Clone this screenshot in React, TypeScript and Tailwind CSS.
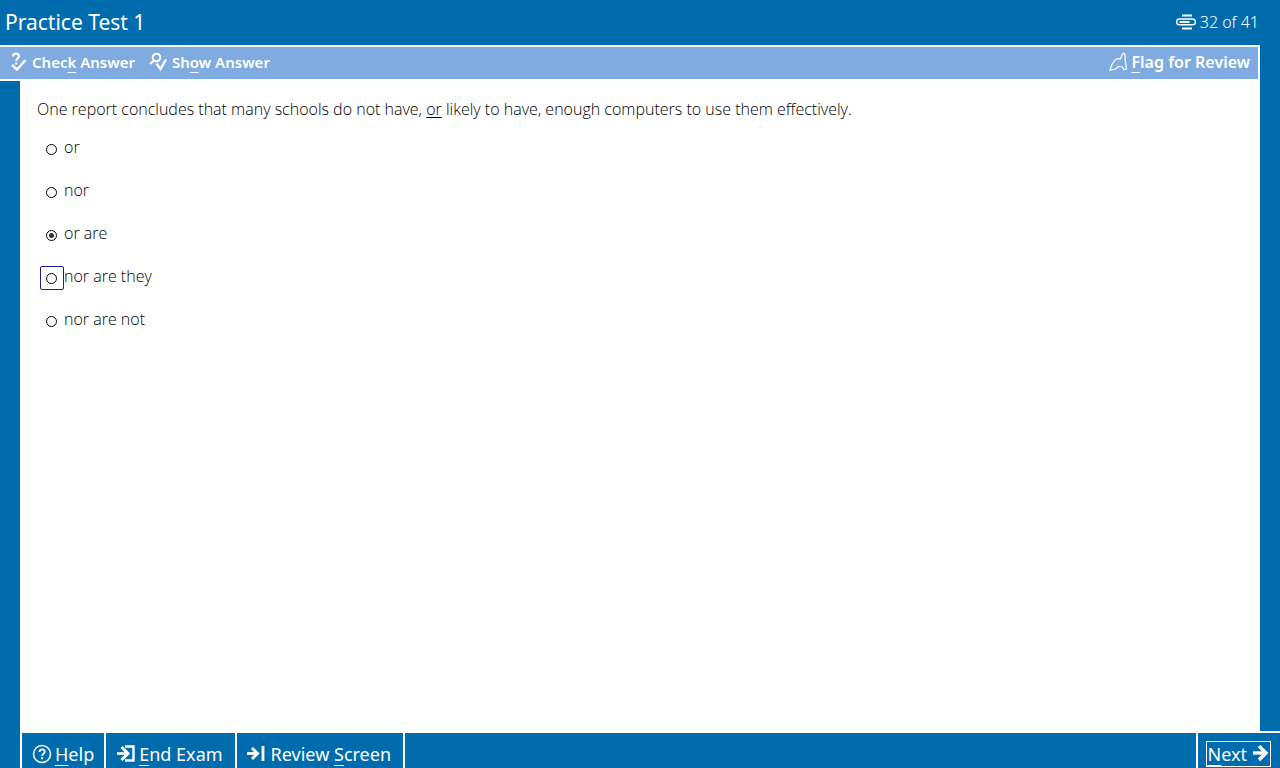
import { useState } from "react";

const options = ["or", "nor", "or are", "nor are they", "nor are not"];

export default function App() {
  const [answer, setAnswer] = useState("or are");
  const [focused, setFocused] = useState("nor are they");

  return (
    <div className="flex min-h-screen flex-col bg-[#006cad] font-['Noto_Sans',sans-serif] text-white">
      <header className="flex h-11 items-center justify-between pr-[21px] pl-[5px]">
        <h1 className="text-[21px] leading-6">Practice Test 1</h1>
        <div className="flex items-center gap-1 text-[16px] leading-6 font-light">
          <ProgressIcon />
          <span>32 of 41</span>
        </div>
      </header>

      <div className="mt-px mr-5 flex h-9 items-center justify-between border-y-2 border-r-2 border-white bg-[#80abe0] pr-2 pb-[2px] pl-[10px] text-[15px] leading-5 font-semibold">
        <div className="flex items-center gap-[14px]">
          <button className="flex items-center gap-1">
            <CheckAnswerIcon />
            <span>
              Chec<Key>k</Key> Answer
            </span>
          </button>
          <button className="flex items-center gap-[5px]">
            <ShowAnswerIcon />
            <span>
              Sh<Key>o</Key>w Answer
            </span>
          </button>
        </div>
        <button className="flex items-center gap-1 text-[16px]">
          <FlagIcon />
          <span>
            <Key>F</Key>lag for Review
          </span>
        </button>
      </div>

      <main className="mx-5 flex-1 bg-white px-[17px] pt-4 text-black">
        <fieldset className="font-['Open_Sans',sans-serif] text-[16px] leading-6 font-light">
          <legend>
            One report concludes that many schools do not have,{" "}
            <span className="underline decoration-1 underline-offset-2">or</span>{" "}
            likely to have, enough computers to use them effectively.
          </legend>
          <div className="mt-[14px] ml-[3px] flex flex-col items-start gap-[19px]">
            {options.map((option) => (
              <label key={option} className="flex h-6 items-center">
                <span
                  className={
                    option === focused
                      ? "mt-1 flex size-6 items-center rounded-xs border border-[#1c1c96] pl-[5px]"
                      : "mt-1 flex size-6 items-center pl-[6px]"
                  }
                >
                  <input
                    type="radio"
                    name="answer"
                    value={option}
                    checked={option === answer}
                    onFocus={() => setFocused(option)}
                    onChange={() => setAnswer(option)}
                    className="flex size-[11px] appearance-none items-center justify-center rounded-full border border-black bg-white outline-none before:size-[5px] before:rounded-full checked:before:bg-[#333333]"
                  />
                </span>
                <span>{option}</span>
              </label>
            ))}
          </div>
        </fieldset>
      </main>

      <footer>
        <div className="mx-5 h-[2px] bg-white" />
        <nav className="-mt-[2px] ml-5 flex h-[37px] border-t-2 border-white text-[18px] leading-6">
          <button className="flex items-center gap-[3px] border-x-2 border-white px-[10px] pt-[6px]">
            <HelpIcon />
            <span>
              <Key>H</Key>elp
            </span>
          </button>
          <button className="flex items-center gap-[3px] border-r-2 border-white pt-[6px] pr-3 pl-[10px]">
            <EndIcon />
            <span>
              <Key>E</Key>nd Exam
            </span>
          </button>
          <button className="flex items-center gap-1 border-r-2 border-white pt-[6px] pr-3 pl-[10px]">
            <ReviewIcon />
            <span>
              Review <Key>S</Key>creen
            </span>
          </button>
          <div className="ml-auto border-l-2 border-white pt-2 pr-[9px] pl-2">
            <button className="flex h-[26px] items-center gap-1 border border-white px-px">
              <span>
                <Key>N</Key>ext
              </span>
              <NextIcon />
            </button>
          </div>
        </nav>
      </footer>
    </div>
  );
}

function Key({ children }: { children: string }) {
  return (
    <span className="underline decoration-1 underline-offset-4">
      {children}
    </span>
  );
}

function ProgressIcon() {
  return (
    <svg width="20" height="16" viewBox="0 0 20 16" fill="none" stroke="white">
      <path d="M6 1.500h10M6 14.500h10" strokeWidth="2" />
      <path
        d="M16 10.800H3.500a2.800 2.800 0 0 1 0-5.800h13a2.800 2.800 0 0 1 0 5.800H6"
        strokeWidth="1.400"
      />
      <path d="M3.500 8h10" strokeWidth="2" />
    </svg>
  );
}

function CheckAnswerIcon() {
  return (
    <svg width="18" height="20" viewBox="0 0 18 20" fill="none" stroke="white">
      <path
        d="M3 4.500C3 2.600 4.200 1.500 6 1.500s3 1 3 2.700C9 6.200 6.200 6.400 6.200 9"
        strokeWidth="2"
      />
      <path d="M6.200 10.500v2" strokeWidth="2" />
      <path d="M2 13l5 4.500L15.500 8" strokeWidth="2.400" />
    </svg>
  );
}

function ShowAnswerIcon() {
  return (
    <svg width="18" height="20" viewBox="0 0 18 20" fill="none" stroke="white">
      <circle cx="7.500" cy="5.500" r="3.800" strokeWidth="2" />
      <path d="M5 8.500L1 12" strokeWidth="2.200" />
      <path d="M7.500 11.500l4 5.500L17 7.500" strokeWidth="2.400" />
    </svg>
  );
}

function FlagIcon() {
  return (
    <svg width="18" height="20" viewBox="0 0 18 20" fill="none" stroke="white">
      <path
        d="M.8 18.500L3 12.500 6 8l2-1.200h3.500L13.500 2l1.300-.8 1 .8.7 8 1 7-2.500.8-1.500-2.800-4-.5L6.500 17 4 17.500z"
        strokeWidth="1.200"
        strokeLinejoin="round"
      />
    </svg>
  );
}

function HelpIcon() {
  return (
    <svg width="20" height="20" viewBox="0 0 20 20" fill="none" stroke="white">
      <circle cx="10" cy="10" r="8.500" strokeWidth="1.500" />
      <path
        d="M7.500 8c0-1.700 1-2.600 2.600-2.600s2.600 1 2.600 2.400c0 1.900-2.600 2-2.600 4.200"
        strokeWidth="1.800"
      />
      <path d="M10.100 13.200v2" strokeWidth="2" />
    </svg>
  );
}

function EndIcon() {
  return (
    <svg width="20" height="20" viewBox="0 0 20 20" fill="none" stroke="white">
      <path d="M1 9.500h11" strokeWidth="2.600" />
      <path d="M5.500 3l6.500 6.500L5.500 16" strokeWidth="3" />
      <path d="M9 2.500h8.500v14H9" strokeWidth="2.400" />
    </svg>
  );
}

function ReviewIcon() {
  return (
    <svg width="20" height="20" viewBox="0 0 20 20" fill="none" stroke="white">
      <path d="M0 9.500h10" strokeWidth="2.800" />
      <path d="M5 4l5.500 5.500L5 15" strokeWidth="3" />
      <path d="M16 2v15" strokeWidth="2.800" />
    </svg>
  );
}

function NextIcon() {
  return (
    <svg width="18" height="18" viewBox="0 0 18 18" fill="none" stroke="white">
      <path d="M2 8h12" strokeWidth="3.400" />
      <path d="M8 1l7 7-7 7" strokeWidth="3.400" />
    </svg>
  );
}
